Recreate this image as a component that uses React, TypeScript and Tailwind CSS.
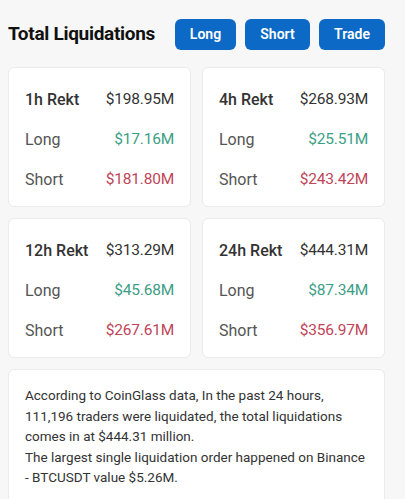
import React from "react";

type Card = { label: string; total: string; long: string; short: string };

const cards: Card[] = [
  { label: "1h Rekt", total: "$198.95M", long: "$17.16M", short: "$181.80M" },
  { label: "4h Rekt", total: "$268.93M", long: "$25.51M", short: "$243.42M" },
  { label: "12h Rekt", total: "$313.29M", long: "$45.68M", short: "$267.61M" },
  { label: "24h Rekt", total: "$444.31M", long: "$87.34M", short: "$356.97M" },
];

function StatCard({ c }: { c: Card }) {
  return (
    <div className="bg-white border border-[#ebebeb] rounded-[6px] px-4 pt-3 pb-2 h-[140px]">
      <div className="flex h-10 items-center justify-between">
        <span className="font-medium text-[#333] text-[16px]">{c.label}</span>
        <span className="text-[#333] text-[15.5px] tracking-[-0.2px]">{c.total}</span>
      </div>
      <div className="flex h-10 items-center justify-between">
        <span className="text-[#555] text-[16px]">Long</span>
        <span className="text-[#3d9e86] text-[15.5px] tracking-[-0.2px]">{c.long}</span>
      </div>
      <div className="flex h-10 items-center justify-between">
        <span className="text-[#555] text-[16px]">Short</span>
        <span className="text-[#c04558] text-[15.5px] tracking-[-0.2px]">{c.short}</span>
      </div>
    </div>
  );
}

export default function App() {
  return (
    <div
      className="w-[405px] h-[499px] overflow-hidden bg-[#f7f7f7] px-2 pt-[19px]"
      style={{ fontFamily: "Roboto, 'Noto Sans', sans-serif" }}
    >
      <div className="flex items-center w-[377px]">
        <h1 className="text-[19px] font-bold text-[#111] tracking-[-0.3px] flex-1">Total Liquidations</h1>
        <div className="flex gap-[9px]">
          {["Long", "Short", "Trade"].map((t) => (
            <button
              key={t}
              className={`h-[31px] rounded-[6px] bg-[#0d69c6] text-white text-[14px] font-semibold ${
                t === "Long" ? "w-[61px]" : t === "Short" ? "w-[65px]" : "w-[66px]"
              }`}
            >
              {t}
            </button>
          ))}
        </div>
      </div>
      <div className="grid grid-cols-2 gap-x-[11px] gap-y-[11px] w-[377px] mt-[17px]">
        {cards.map((c) => (
          <StatCard key={c.label} c={c} />
        ))}
      </div>
      <div className="mt-[11px] w-[377px] bg-white border border-[#ebebeb] rounded-[6px] px-4 pt-[15px] pb-4 text-[13.5px] leading-[20.5px] text-[#333]">
        <div className="whitespace-nowrap">According to CoinGlass data, In the past 24 hours,</div>
        <div className="whitespace-nowrap">111,196 traders were liquidated, the total liquidations</div>
        <div className="whitespace-nowrap">comes in at $444.31 million.</div>
        <div className="whitespace-nowrap">The largest single liquidation order happened on Binance</div>
        <div className="whitespace-nowrap">- BTCUSDT value $5.26M.</div>
      </div>
    </div>
  );
}
